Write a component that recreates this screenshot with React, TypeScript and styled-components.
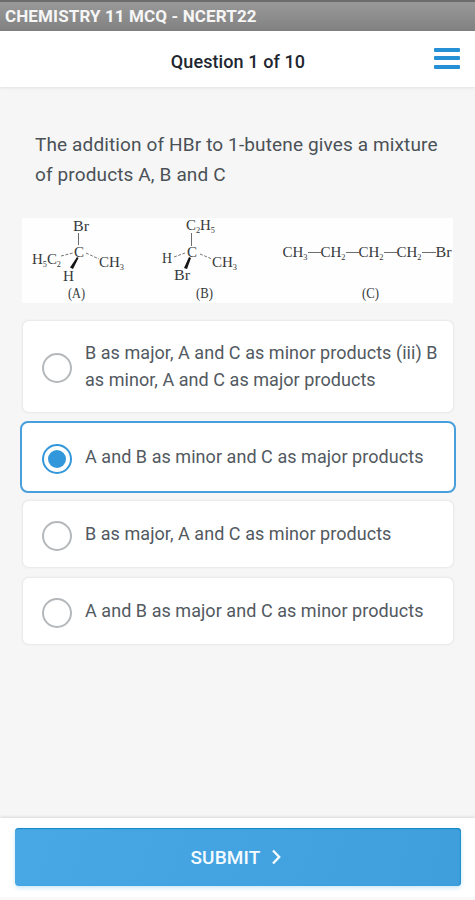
import React, { useState } from "react";
import styled, { createGlobalStyle } from "styled-components";

const GlobalStyle = createGlobalStyle`
  * { box-sizing: border-box; }
  body { margin: 0; background: #f6f6f6; font-family: Roboto, sans-serif; }
`;

const Screen = styled.div`
  display: flex;
  flex-direction: column;
  width: 475px;
  height: 900px;
  overflow: hidden;
  background: #f6f6f6;
  color: #3c444c;
`;

const TitleBar = styled.div`
  flex: none;
  height: 31px;
  padding: 1px 0 0 5px;
  border-top: 2px solid #6c6c6c;
  background: linear-gradient(#999, #818181);
  color: #f6f6f6;
  font-size: 17px;
  font-weight: 700;
  line-height: 27px;
  letter-spacing: 0.12px;
  white-space: nowrap;
`;

const Header = styled.header`
  flex: none;
  display: grid;
  grid-template-columns: 44px 1fr 44px;
  align-items: center;
  height: 56px;
  background: #fff;
  box-shadow: 0 1px 3px rgba(0, 0, 0, 0.09);
`;

const Progress = styled.h1`
  grid-column: 2;
  margin: 5px 0 0 1px;
  font-size: 18px;
  font-weight: 500;
  line-height: 24px;
  letter-spacing: 0.09px;
  text-align: center;
  color: #202630;
`;

const MenuButton = styled.button`
  display: flex;
  flex-direction: column;
  justify-content: space-between;
  width: 26px;
  height: 21px;
  margin: 0 0 2px 3px;
  padding: 0;
  border: 0;
  background: none;
`;

const MenuLine = styled.span`
  height: 4px;
  border-radius: 1px;
  background: #2590d5;
`;

const Content = styled.main`
  flex: 1;
  padding: 43px 20px 0;
`;

const Question = styled.p`
  margin: 0 0 28px 15px;
  font-size: 19px;
  line-height: 30px;
  letter-spacing: 0.13px;
  white-space: nowrap;
  color: #4a5157;
`;

const Figure = styled.svg`
  display: block;
  width: 431px;
  height: 85px;
  margin-left: 2px;
  background: #fefefe;
  font-family: "Liberation Serif", serif;
  font-size: 14.5px;
  fill: #35383b;
`;

const Bond = styled.line<{ $faint?: boolean }>`
  stroke: ${(p) => (p.$faint ? "#777" : "#6b6e70")};
  stroke-width: 1;
  stroke-dasharray: ${(p) => (p.$faint ? "3 1.5" : "none")};
`;

const Options = styled.div`
  display: flex;
  flex-direction: column;
  width: 436px;
  margin-top: 17px;
`;

const Option = styled.button<{ $selected: boolean; $tall?: boolean }>`
  display: flex;
  align-items: center;
  gap: 13px;
  width: ${(p) => (p.$selected ? 436 : 432)}px;
  height: ${(p) => (p.$selected ? 72 : p.$tall ? 93 : 68)}px;
  margin: 0 0 ${(p) => (p.$selected ? 7 : p.$tall ? 8 : 9)}px ${(p) => (p.$selected ? 0 : 2)}px;
  padding: 0 0 0 ${(p) => (p.$selected ? 20 : 19)}px;
  border: ${(p) => (p.$selected ? "2px solid #489fdb" : "1px solid #ebebeb")};
  border-radius: ${(p) => (p.$selected ? 8 : 7)}px;
  background: #fff;
  box-shadow: ${(p) => (p.$selected ? "none" : "0 0 2px rgba(0, 0, 0, 0.07)")};
  font-family: inherit;
  text-align: left;
  color: #52595f;
`;

const Radio = styled.span<{ $selected: boolean }>`
  flex: none;
  display: grid;
  place-items: center;
  width: 30px;
  height: 30px;
  margin-top: 3px;
  border: 2px solid ${(p) => (p.$selected ? "#3297db" : "#b5b8bb")};
  border-radius: 50%;
`;

const RadioDot = styled.span`
  width: 18px;
  height: 18px;
  border-radius: 50%;
  background: #3297db;
`;

const Label = styled.span`
  margin-top: -1px;
  font-size: 18px;
  line-height: 27px;
  letter-spacing: 0.05px;
  white-space: pre;
`;

const Footer = styled.footer`
  flex: none;
  height: 82px;
  padding: 10px 14px 0 15px;
  background: #fff;
  border-bottom: 3px solid #f9f9f9;
  box-shadow: 0 -1px 3px rgba(0, 0, 0, 0.12);
`;

const SubmitButton = styled.button`
  display: flex;
  align-items: center;
  justify-content: center;
  gap: 11px;
  width: 446px;
  height: 58px;
  padding: 0 5px 0 0;
  border: 0;
  border-radius: 4px;
  background: linear-gradient(110deg, #48a8e5, #3f9edc);
  box-shadow: inset 0 2px 1px -1px #168bc5, inset -1px 0 1px #238fca, 0 2px 4px rgba(70, 170, 230, 0.28);
  color: #f5fbff;
  font-family: inherit;
  font-size: 19px;
  font-weight: 500;
  letter-spacing: 0.15px;
`;

const choices = [
  { text: "B as major, A and C as minor products (iii) B\nas minor, A and C as major products", tall: true },
  { text: "A and B as minor and C as major products" },
  { text: "B as major, A and C as minor products" },
  { text: "A and B as major and C as minor products" },
];

function Formula({ x, y, parts, width }: { x: number; y: number; parts: string[]; width: number }) {
  return (
    <text x={x} y={y} textLength={width} lengthAdjust="spacingAndGlyphs">
      {parts.map((part, i) =>
        /^\d$/.test(part) ? (
          <tspan key={i} fontSize="8" dy="2.5">{part}</tspan>
        ) : (
          <tspan key={i} dy={i > 0 ? -2.5 : 0}>{part}</tspan>
        )
      )}
    </text>
  );
}

function Products() {
  return (
    <Figure viewBox="0 0 431 85" role="img" aria-label="Products A, B and C">
      <Formula x={51} y={13} parts={["Br"]} width={16} />
      <Bond x1="56.5" y1="15" x2="56.5" y2="27" />
      <Formula x={52} y={39} parts={["C"]} width={10} />
      <Formula x={10} y={46} parts={["H", "5", "C", "2"]} width={29} />
      <Bond $faint x1="39" y1="38" x2="51" y2="35" />
      <Bond $faint x1="64" y1="35" x2="77" y2="41" />
      <Formula x={77} y={49} parts={["CH", "3"]} width={25} />
      <polygon points="55,39 56.5,40 51,51 48,49.5" fill="#151515" />
      <Formula x={41} y={63} parts={["H"]} width={11} />
      <text x="46" y="80" fontSize="14" textLength="17" lengthAdjust="spacingAndGlyphs">(A)</text>

      <Formula x={164} y={12} parts={["C", "2", "H", "5"]} width={29} />
      <Bond x1="169.5" y1="15" x2="169.5" y2="28" />
      <Formula x={165} y={39} parts={["C"]} width={10} />
      <Formula x={140} y={45} parts={["H"]} width={10} />
      <Bond $faint x1="152" y1="39" x2="163" y2="35" />
      <Bond $faint x1="178" y1="36" x2="190" y2="41" />
      <Formula x={190} y={49} parts={["CH", "3"]} width={25} />
      <polygon points="167,39 169,40 165,51 162,50" fill="#151515" />
      <Formula x={152} y={62} parts={["Br"]} width={16} />
      <text x="174" y="80" fontSize="14" textLength="17" lengthAdjust="spacingAndGlyphs">(B)</text>

      <Formula x={260.5} y={39} parts={["CH", "3"]} width={25} />
      <Bond x1="286" y1="34.5" x2="299" y2="34.5" />
      <Formula x={298.5} y={39} parts={["CH", "2"]} width={25} />
      <Bond x1="324" y1="34.5" x2="337" y2="34.5" />
      <Formula x={336.5} y={39} parts={["CH", "2"]} width={25} />
      <Bond x1="362" y1="34.5" x2="375" y2="34.5" />
      <Formula x={374.5} y={39} parts={["CH", "2"]} width={25} />
      <Bond x1="400" y1="34.5" x2="414" y2="34.5" />
      <Formula x={413.5} y={39} parts={["Br"]} width={16} />
      <text x="340" y="80" fontSize="14" textLength="17" lengthAdjust="spacingAndGlyphs">(C)</text>
    </Figure>
  );
}

export default function App() {
  const [selected, setSelected] = useState(1);
  return (
    <Screen>
      <GlobalStyle />
      <TitleBar>CHEMISTRY 11 MCQ - NCERT22</TitleBar>
      <Header>
        <Progress>Question 1 of 10</Progress>
        <MenuButton aria-label="Menu"><MenuLine /><MenuLine /><MenuLine /></MenuButton>
      </Header>
      <Content>
        <Question>The addition of HBr to 1-butene gives a mixture<br />of products A, B and C</Question>
        <Products />
        <Options role="radiogroup">
          {choices.map(({ text, tall }, i) => (
            <Option key={text} $selected={i === selected} $tall={tall} onClick={() => setSelected(i)} role="radio" aria-checked={i === selected}>
              <Radio $selected={i === selected}>{i === selected && <RadioDot />}</Radio>
              <Label>{text}</Label>
            </Option>
          ))}
        </Options>
      </Content>
      <Footer>
        <SubmitButton>
          SUBMIT
          <svg width="9" height="16" viewBox="0 0 9 16" fill="none" stroke="currentColor" strokeWidth="2.4">
            <path d="M1 1.5 7.2 8 1 14.5" />
          </svg>
        </SubmitButton>
      </Footer>
    </Screen>
  );
}
